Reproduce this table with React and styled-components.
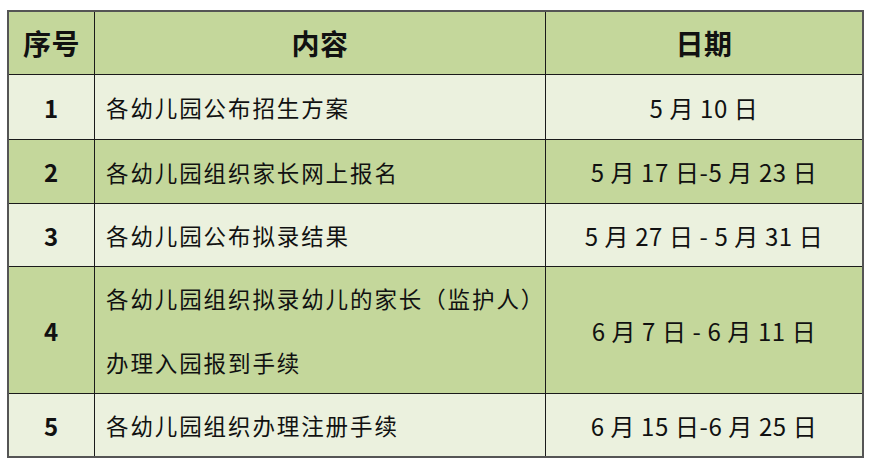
import React from "react";
import styled, { createGlobalStyle } from "styled-components";

const Global = createGlobalStyle`
  html, body { margin: 0; padding: 0; background: #ffffff; }
  body { font-family: "Noto Sans CJK SC", "Noto Sans", sans-serif; color: #111; }
`;

const Frame = styled.div`
  margin: 10px 0 0 7px;
  width: max-content;
  border: 2px solid #555555;
`;

const Grid = styled.div`
  display: grid;
  grid-template-columns: 85px 450px 316px;
  grid-template-rows: 62px 64px 63px 62px 126px 62px;
  gap: 1px;
  background: #1a1a1a;
`;

const Cell = styled.div`
  background: ${(p) => (p.$green ? "#c4d79b" : "#ebf1de")};
  display: flex;
  align-items: center;
  justify-content: ${(p) => (p.$left ? "flex-start" : "center")};
  padding-left: ${(p) => (p.$left ? "11px" : "0")};
  font-size: ${(p) => p.$size || "22px"};
  font-weight: ${(p) => (p.$bold ? 700 : 400)};
  letter-spacing: ${(p) => (p.$left ? "1.9px" : "0.6px")};
  color: #111;
  white-space: pre;
`;

const Lines = styled.div`
  display: flex;
  flex-direction: column;
  line-height: 64px;
`;

const rows = [
  { no: "1", content: ["各幼儿园公布招生方案"], date: "5 月 10 日" },
  { no: "2", content: ["各幼儿园组织家长网上报名"], date: "5 月 17 日-5 月 23 日" },
  { no: "3", content: ["各幼儿园公布拟录结果"], date: "5 月 27 日 - 5 月 31 日" },
  {
    no: "4",
    content: ["各幼儿园组织拟录幼儿的家长（监护人）", "办理入园报到手续"],
    date: "6 月 7 日 - 6 月 11 日",
  },
  { no: "5", content: ["各幼儿园组织办理注册手续"], date: "6 月 15 日-6 月 25 日" },
];

export default function App() {
  return (
    <>
      <Global />
      <Frame>
        <Grid>
          <Cell $green $size="28px" $bold>序号</Cell>
          <Cell $green $size="28px" $bold>内容</Cell>
          <Cell $green $size="28px" $bold>日期</Cell>
          {rows.map((r, i) => {
            const green = i % 2 === 1;
            return (
              <React.Fragment key={r.no}>
                <Cell $green={green} $size="24px" $bold>{r.no}</Cell>
                <Cell $green={green} $size="22.5px" $left>
                  {r.content.length > 1 ? (
                    <Lines>
                      {r.content.map((c) => (
                        <span key={c}>{c}</span>
                      ))}
                    </Lines>
                  ) : (
                    r.content[0]
                  )}
                </Cell>
                <Cell $green={green} $size="24px">{r.date}</Cell>
              </React.Fragment>
            );
          })}
        </Grid>
      </Frame>
    </>
  );
}
